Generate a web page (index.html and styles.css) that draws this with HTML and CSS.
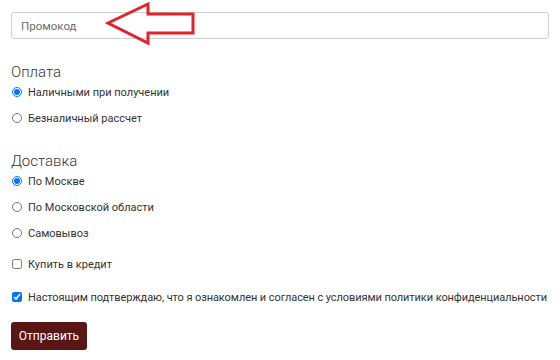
FILE: index.html
```html
<!DOCTYPE html>
<html lang="ru">
<head>
    <meta charset="UTF-8">
    <meta name="viewport" content="width=device-width, initial-scale=1.0">
    <title>Оформление заказа</title>
    <link rel="stylesheet" href="styles.css">
</head>
<body>
    <form class="order-form" onsubmit="return false;">
        <div class="promo">
            <input type="text" class="promo-input" placeholder="Промокод">
            <svg class="promo-arrow" width="110" height="50" viewBox="0 0 110 50">
                <path d="M13 23 L53 4 L53 14 L98 14 L98 33 L53 33 L53 43 Z" fill="none" stroke="#e2232b" stroke-width="3" stroke-linejoin="miter"/>
            </svg>
        </div>

        <div class="group">
            <div class="group-title">Оплата</div>
            <label class="option"><input type="radio" name="pay" checked> Наличными при получении</label>
            <label class="option"><input type="radio" name="pay"> Безналичный рассчет</label>
        </div>

        <div class="group">
            <div class="group-title">Доставка</div>
            <label class="option"><input type="radio" name="delivery" checked> По Москве</label>
            <label class="option"><input type="radio" name="delivery"> По Московской области</label>
            <label class="option"><input type="radio" name="delivery"> Самовывоз</label>
        </div>

        <label class="option check credit"><input type="checkbox"> Купить в кредит</label>
        <label class="option check agree"><input type="checkbox" checked> Настоящим подтверждаю, что я ознакомлен и согласен с условиями политики конфиденциальности</label>

        <button type="submit" class="submit-btn">Отправить</button>
    </form>
</body>
</html>
```

FILE: styles.css
```css
body {
    font-family: Roboto, "Noto Sans", Arial, sans-serif;
    margin: 0;
    padding: 12px 11px;
    background-color: #fff;
    color: #333;
    font-size: 11px;
}
.promo {
    position: relative;
}
.promo-input {
    display: block;
    box-sizing: border-box;
    width: 100%;
    height: 27px;
    padding: 0 9px;
    border: 1px solid #cfcfcf;
    border-radius: 3px;
    font-family: inherit;
    font-size: 11.5px;
    color: #333;
}
.promo-input::placeholder {
    color: #6c6c6c;
}
.promo-arrow {
    position: absolute;
    left: 84px;
    top: -12px;
}
.group {
    margin-top: 26px;
}
.group + .group {
    margin-top: 23px;
}
.group-title {
    font-size: 15px;
    font-weight: 300;
    line-height: 14px;
    color: #333;
}
.option {
    display: flex;
    align-items: center;
    height: 26px;
    padding-left: 1px;
    white-space: nowrap;
}
.option input {
    width: 10px;
    height: 10px;
    margin: 0 6px 0 0;
}
.agree {
    margin-top: 7px;
    letter-spacing: -0.08px;
}
.credit {
    margin-top: 5px;
}
.submit-btn {
    display: block;
    margin-top: 12px;
    width: 76px;
    height: 28px;
    border: none;
    border-radius: 3px;
    background-color: #5a1515;
    color: #fff;
    font-family: inherit;
    font-size: 12px;
    cursor: pointer;
}
```
